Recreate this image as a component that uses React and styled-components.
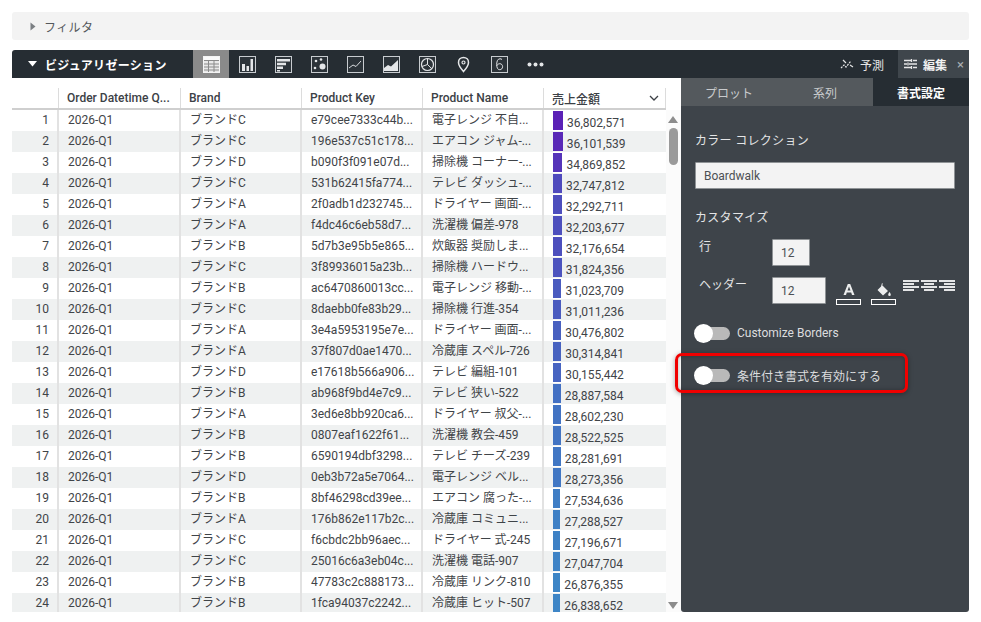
import React from 'react';
import styled, { createGlobalStyle } from 'styled-components';

const GlobalStyle = createGlobalStyle`
  html, body {
    margin: 0;
    padding: 0;
    background: #fff;
    font-family: Roboto, "Noto Sans CJK JP", sans-serif;
    overflow: hidden;
  }
`;

const Page = styled.div`
  width: 981px;
  height: 622px;
  box-sizing: border-box;
  padding: 12px 12px 10px;
  display: flex;
  flex-direction: column;
  overflow: hidden;
`;

const FilterBar = styled.div`
  height: 28px;
  flex: none;
  display: flex;
  align-items: center;
  gap: 8px;
  padding-left: 18px;
  background: #f3f3f3;
  border-radius: 3px;
  font-size: 12px;
  letter-spacing: 0.4px;
  color: #53585c;
`;

const VizHeader = styled.div`
  height: 28px;
  flex: none;
  margin-top: 10px;
  display: flex;
  align-items: center;
  background: #262d33;
  border-radius: 3px 3px 0 0;
  color: #fff;
`;

const VizTitle = styled.div`
  width: 181px;
  flex: none;
  display: flex;
  align-items: center;
  gap: 8px;
  padding-left: 16px;
  box-sizing: border-box;
  font-size: 12px;
  font-weight: 700;
  letter-spacing: 0.3px;
`;

const ChartButton = styled.div`
  width: 36px;
  height: 28px;
  flex: none;
  display: flex;
  align-items: center;
  justify-content: center;
  background: ${(p) => (p.$active ? '#8a8a8a' : 'transparent')};
`;

const HeaderRight = styled.div`
  margin-left: auto;
  height: 100%;
  display: flex;
  align-items: center;
`;

const ModeButton = styled.div`
  height: 100%;
  display: flex;
  align-items: center;
  gap: 6px;
  box-sizing: border-box;
  padding: ${(p) => (p.$active ? '0 5px 0 6px' : '0 14px 0 0')};
  background: ${(p) => (p.$active ? '#3f464c' : 'transparent')};
  color: ${(p) => (p.$active ? '#f2f2f2' : '#e6e6e6')};
  font-size: 12px;
  font-weight: ${(p) => (p.$active ? 700 : 400)};
`;

const CloseMark = styled.span`
  margin-left: 4px;
  font-size: 13px;
  font-weight: 400;
  color: #a9aeb2;
`;

const Body = styled.div`
  flex: 1;
  min-height: 0;
  display: flex;
`;

const TableArea = styled.div`
  width: 669px;
  flex: none;
  position: relative;
  overflow: hidden;
`;

const HeaderRow = styled.div`
  height: 32px;
  box-sizing: border-box;
  padding-top: 10px;
  display: flex;
  border-bottom: 2px solid #cfcfcf;
  width: 654px;
`;

const HeaderCell = styled.div`
  width: ${(p) => p.$w}px;
  flex: none;
  box-sizing: border-box;
  padding-left: 8px;
  padding-right: 6px;
  border-right: 1px solid #dcdcdc;
  display: flex;
  align-items: center;
  justify-content: space-between;
  font-size: 12px;
  font-weight: 500;
  color: #3c4146;
  white-space: nowrap;
`;

const Row = styled.div`
  height: 21px;
  width: 654px;
  display: flex;
  background: ${(p) => (p.$odd ? '#fff' : '#eff1f1')};
`;

const Cell = styled.div`
  width: ${(p) => p.$w}px;
  flex: none;
  box-sizing: border-box;
  padding-left: 9px;
  border-right: 2px solid #e2e2e2;
  font-size: 12px;
  line-height: 21px;
  color: #3f4448;
  white-space: nowrap;
  overflow: hidden;
`;

const IndexCell = styled(Cell)`
  padding: 0 8px 0 0;
  text-align: right;
`;

const ValueCell = styled.div`
  flex: 1;
  display: flex;
  box-sizing: border-box;
  padding: 1px 0 1px 9px;
  font-size: 12px;
  color: #3f4448;
`;

const ValueBar = styled.div`
  height: 19px;
  flex: none;
`;

const ValueText = styled.span`
  margin-left: 4px;
  line-height: 24px;
`;

const ScrollTrack = styled.div`
  position: absolute;
  right: 0;
  top: 32px;
  bottom: 0;
  width: 15px;
  background: #fbfbfb;
`;

const ScrollArrow = styled.div`
  position: absolute;
  left: 2px;
  ${(p) => (p.$up ? 'top: 6px;' : 'bottom: 3px;')}
  width: 0;
  height: 0;
  border-left: 5px solid transparent;
  border-right: 5px solid transparent;
  ${(p) => (p.$up ? 'border-bottom: 7px solid #8c8c8c;' : 'border-top: 7px solid #8c8c8c;')}
`;

const ScrollThumb = styled.div`
  position: absolute;
  left: 3px;
  top: 18px;
  width: 9px;
  height: 37px;
  border-radius: 5px;
  background: #9a9a9a;
`;

const Panel = styled.div`
  width: 288px;
  flex: none;
  position: relative;
  background: #3e444a;
  border-radius: 0 0 3px 3px;
  color: #e4e5e6;
`;

const Tabs = styled.div`
  height: 28px;
  display: grid;
  grid-template-columns: 96px 96px 96px;
  background: #54595d;
`;

const Tab = styled.div`
  display: flex;
  align-items: center;
  justify-content: center;
  font-size: 12px;
  font-weight: ${(p) => (p.$active ? 700 : 400)};
  color: ${(p) => (p.$active ? '#fff' : '#c9cbcd')};
  background: ${(p) => (p.$active ? '#262d33' : 'transparent')};
`;

const PanelBody = styled.div`
  padding: 26px 14px 0;
  display: flex;
  flex-direction: column;
`;

const SectionLabel = styled.div`
  font-size: 12px;
  line-height: 18px;
  letter-spacing: 0.3px;
`;

const Field = styled.div`
  box-sizing: border-box;
  width: ${(p) => p.$w}px;
  height: 27px;
  flex: none;
  padding-left: ${(p) => p.$pad || 8}px;
  display: flex;
  align-items: center;
  background: #f3f3f3;
  border: 1px solid #8f9396;
  border-radius: 1px;
  font-size: 12px;
  color: #4c5054;
`;

const CustomRow = styled.div`
  display: flex;
  align-items: flex-start;
  margin-top: ${(p) => p.$top}px;
`;

const RowLabel = styled.div`
  width: 77px;
  flex: none;
  padding-left: 4px;
  box-sizing: border-box;
  font-size: 12px;
  line-height: 16px;
  margin-top: ${(p) => p.$top || 0}px;
`;

const ColorTool = styled.div`
  width: 25px;
  margin-left: ${(p) => p.$left}px;
  flex: none;
  display: flex;
  flex-direction: column;
  align-items: center;
`;

const Swatch = styled.div`
  width: 25px;
  height: 6px;
  box-sizing: border-box;
  margin-top: 1px;
  border: 1px solid #fff;
`;

const AlignGroup = styled.div`
  display: flex;
  gap: 2px;
  margin: 3px 0 0 7px;
`;

const ToggleRow = styled.div`
  display: flex;
  align-items: center;
  gap: 7px;
  height: 18px;
  margin-top: ${(p) => p.$top}px;
  font-size: 12px;
  color: #dcdddf;
`;

const Toggle = styled.div`
  position: relative;
  width: 35px;
  height: 13px;
  flex: none;
  background: #b9b9b9;
  border-radius: 7px;
`;

const Knob = styled.div`
  position: absolute;
  left: -1px;
  top: -3px;
  width: 19px;
  height: 19px;
  border-radius: 50%;
  background: #fff;
`;

const Callout = styled.div`
  position: absolute;
  left: -6px;
  top: 275px;
  width: 233px;
  height: 40px;
  box-sizing: border-box;
  border: 3px solid #f00000;
  border-radius: 7px;
  box-shadow: 0 1px 5px rgba(0, 0, 0, 0.35), inset 0 0 4px rgba(0, 0, 0, 0.3);
  pointer-events: none;
`;

const Frame = ({ children }) => (
  <svg width="17" height="17" viewBox="0 0 17 17">
    <rect x="0.5" y="0.5" width="16" height="16" fill="#2c3339" stroke="#c8ccd0" />
    {children}
  </svg>
);

const chartIcons = [
  <svg width="17" height="17" viewBox="0 0 17 17" key="table">
    <rect x="0.5" y="0.5" width="16" height="16" fill="#e8e8e8" stroke="#f4f4f4" />
    <rect x="1" y="1" width="15" height="3" fill="#fafafa" />
    <path d="M1 4.5h15M1 8h15M1 11h15M1 14h15M5.5 4v12M11 4v12" stroke="#8a8a8a" strokeWidth="1" />
  </svg>,
  <Frame key="bar">
    <path d="M3 8h3v7H3zM7.5 10h2.500v5H7.500zM11.500 3H14v12h-2.500z" fill="#e4e6e8" />
  </Frame>,
  <Frame key="rank">
    <path d="M2 3h13v2.500H2zM2 6.800h9v2.500H2zM2 10.500h6V13H2zM2 14h3v1.500H2z" fill="#e4e6e8" />
  </Frame>,
  <Frame key="scatter">
    <circle cx="5" cy="5" r="1.300" fill="#e4e6e8" />
    <circle cx="10" cy="3.500" r="1.300" fill="#e4e6e8" />
    <circle cx="4" cy="12" r="1.300" fill="#e4e6e8" />
    <circle cx="11.500" cy="10.500" r="3" fill="#e4e6e8" />
  </Frame>,
  <Frame key="line">
    <path d="M2 12l4-3 3 1.500 5-5.500" fill="none" stroke="#d8dbde" strokeWidth="1" />
  </Frame>,
  <Frame key="area">
    <path d="M1 15V12l4-3 3 1.500 7-6.500v11z" fill="#e4e6e8" />
  </Frame>,
  <svg width="17" height="17" viewBox="0 0 17 17" key="pie">
    <rect x="0.500" y="0.500" width="16" height="16" fill="#2c3339" stroke="#c8ccd0" />
    <circle cx="8.500" cy="8.500" r="6" fill="none" stroke="#e4e6e8" strokeWidth="1.200" />
    <path d="M8.500 2.500v6l4.300 4.200M8.500 8.500l-5.500 2" fill="none" stroke="#e4e6e8" strokeWidth="1" />
  </svg>,
  <svg width="17" height="17" viewBox="0 0 17 17" key="pin">
    <path d="M8.500 1.500c-2.900 0-5 2.100-5 4.900 0 3.300 5 9.100 5 9.100s5-5.800 5-9.100c0-2.800-2.100-4.900-5-4.900z" fill="none" stroke="#e4e6e8" strokeWidth="1.500" />
    <circle cx="8.500" cy="6.500" r="1.500" fill="none" stroke="#e4e6e8" strokeWidth="1.200" />
  </svg>,
  <svg width="17" height="17" viewBox="0 0 17 17" key="single">
    <rect x="0.500" y="0.500" width="16" height="16" fill="#2c3339" stroke="#c8ccd0" />
    <path d="M11 3.500c-.6-.5-1.300-.7-2-.7-2.200 0-3.300 2.200-3.300 5.700 0 3.300 1 5.200 3 5.200 1.700 0 2.900-1.300 2.900-3 0-1.800-1.200-3-2.800-3-1.300 0-2.500.8-3 2" fill="none" stroke="#e4e6e8" strokeWidth="1" />
  </svg>,
  <svg width="17" height="17" viewBox="0 0 17 17" key="more">
    <circle cx="2.500" cy="8.500" r="2" fill="#e4e6e8" />
    <circle cx="8.500" cy="8.500" r="2" fill="#e4e6e8" />
    <circle cx="14.500" cy="8.500" r="2" fill="#e4e6e8" />
  </svg>,
];

const AlignIcon = ({ lines }) => (
  <svg width="16" height="13" viewBox="0 0 16 13">
    {lines.map(([x, w], i) => (
      <rect key={i} x={x} y={i * 3} width={w} height="2" fill="#e4e5e6" />
    ))}
  </svg>
);

const columns = [47, 122, 121, 121, 121];

const rows = [
  ['ブランドC', 'e79cee7333c44b...', '電子レンジ 不自...', '36,802,571'],
  ['ブランドC', '196e537c51c178...', 'エアコン ジャム-...', '36,101,539'],
  ['ブランドD', 'b090f3f091e07d...', '掃除機 コーナー-...', '34,869,852'],
  ['ブランドC', '531b62415fa774...', 'テレビ ダッシュ-...', '32,747,812'],
  ['ブランドA', '2f0adb1d232745...', 'ドライヤー 画面-...', '32,292,711'],
  ['ブランドA', 'f4dc46c6eb58d7...', '洗濯機 偏差-978', '32,203,677'],
  ['ブランドB', '5d7b3e95b5e865...', '炊飯器 奨励しま...', '32,176,654'],
  ['ブランドC', '3f89936015a23b...', '掃除機 ハードウ...', '31,824,356'],
  ['ブランドB', 'ac6470860013cc...', '電子レンジ 移動-...', '31,023,709'],
  ['ブランドC', '8daebb0fe83b29...', '掃除機 行進-354', '31,011,236'],
  ['ブランドA', '3e4a5953195e7e...', 'ドライヤー 画面-...', '30,476,802'],
  ['ブランドA', '37f807d0ae1470...', '冷蔵庫 スペル-726', '30,314,841'],
  ['ブランドD', 'e17618b566a906...', 'テレビ 編組-101', '30,155,442'],
  ['ブランドB', 'ab968f9bd4e7c9...', 'テレビ 狭い-522', '28,887,584'],
  ['ブランドA', '3ed6e8bb920ca6...', 'ドライヤー 叔父-...', '28,602,230'],
  ['ブランドB', '0807eaf1622f61...', '洗濯機 教会-459', '28,522,525'],
  ['ブランドB', '6590194dbf3298...', 'テレビ チーズ-239', '28,281,691'],
  ['ブランドD', '0eb3b72a5e7064...', '電子レンジ ベル...', '28,273,356'],
  ['ブランドB', '8bf46298cd39ee...', 'エアコン 腐った-...', '27,534,636'],
  ['ブランドA', '176b862e117b2c...', '冷蔵庫 コミュニ...', '27,288,527'],
  ['ブランドC', 'f6cbdc2bb96aec...', 'ドライヤー 式-245', '27,196,671'],
  ['ブランドC', '25016c6a3eb04c...', '洗濯機 電話-907', '27,047,704'],
  ['ブランドB', '47783c2c888173...', '冷蔵庫 リンク-810', '26,876,355'],
  ['ブランドB', '1fca94037c2242...', '冷蔵庫 ヒット-507', '26,838,652'],
];

const barStyle = (text) => {
  const value = Number(text.replace(/,/g, ''));
  const t = (value - 26838652) / (36802571 - 26838652);
  const r = Math.round(61 + (91 - 61) * t);
  const g = Math.round(133 + (33 - 133) * t);
  const b = Math.round(198 + (182 - 198) * t);
  return { width: `${value / 3680257}px`, background: `rgb(${r},${g},${b})` };
};

const App = () => (
  <Page>
    <GlobalStyle />
    <FilterBar>
      <svg width="6" height="9" viewBox="0 0 6 9"><path d="M0.500 0.500l5 4-5 4z" fill="#7b7f83" /></svg>
      フィルタ
    </FilterBar>
    <VizHeader>
      <VizTitle>
        <svg width="9" height="6" viewBox="0 0 9 6"><path d="M0 0h9L4.500 5.500z" fill="#fff" /></svg>
        ビジュアリゼーション
      </VizTitle>
      {chartIcons.map((icon, i) => (
        <ChartButton key={i} $active={i === 0}>{icon}</ChartButton>
      ))}
      <HeaderRight>
        <ModeButton>
          <svg width="14" height="12" viewBox="0 0 14 12">
            <path d="M1 10l3-3 2 2 5-6" fill="none" stroke="#e6e6e6" strokeWidth="1.200" strokeDasharray="2 1" />
            <path d="M3 2l3 3M10 7l3 2" stroke="#e6e6e6" strokeWidth="1.200" />
          </svg>
          予測
        </ModeButton>
        <ModeButton $active>
          <svg width="13" height="12" viewBox="0 0 13 12">
            <path d="M0 2.500h7M9 2.500h4M0 6h3M5 6h8M0 9.500h7M9 9.500h4M7.500 1v3M4 4.500v3M7.500 8v3" stroke="#e6e6e6" strokeWidth="1.300" />
          </svg>
          編集
          <CloseMark>×</CloseMark>
        </ModeButton>
      </HeaderRight>
    </VizHeader>
    <Body>
      <TableArea>
        <HeaderRow>
          <HeaderCell $w={columns[0]} />
          <HeaderCell $w={columns[1]}>Order Datetime Q...</HeaderCell>
          <HeaderCell $w={columns[2]}>Brand</HeaderCell>
          <HeaderCell $w={columns[3]}>Product Key</HeaderCell>
          <HeaderCell $w={columns[4]}>Product Name</HeaderCell>
          <HeaderCell $w={122}>
            売上金額
            <svg width="10" height="6" viewBox="0 0 10 6"><path d="M1 1l4 4 4-4" fill="none" stroke="#3c4146" strokeWidth="1.300" /></svg>
          </HeaderCell>
        </HeaderRow>
        {rows.map((row, i) => (
          <Row key={i} $odd={i % 2 === 0}>
            <IndexCell $w={columns[0]}>{i + 1}</IndexCell>
            <Cell $w={columns[1]}>2026-Q1</Cell>
            <Cell $w={columns[2]}>{row[0]}</Cell>
            <Cell $w={columns[3]}>{row[1]}</Cell>
            <Cell $w={columns[4]}>{row[2]}</Cell>
            <ValueCell>
              <ValueBar style={barStyle(row[3])} />
              <ValueText>{row[3]}</ValueText>
            </ValueCell>
          </Row>
        ))}
        <ScrollTrack>
          <ScrollArrow $up />
          <ScrollThumb />
          <ScrollArrow />
        </ScrollTrack>
      </TableArea>
      <Panel>
        <Tabs>
          <Tab>プロット</Tab>
          <Tab>系列</Tab>
          <Tab $active>書式設定</Tab>
        </Tabs>
        <PanelBody>
          <SectionLabel>カラー コレクション</SectionLabel>
          <Field $w={260} style={{ marginTop: 12 }}>Boardwalk</Field>
          <SectionLabel style={{ marginTop: 20 }}>カスタマイズ</SectionLabel>
          <CustomRow $top={12}>
            <RowLabel>行</RowLabel>
            <Field $w={38}>12</Field>
          </CustomRow>
          <CustomRow $top={11}>
            <RowLabel $top={0}>ヘッダー</RowLabel>
            <Field $w={54}>12</Field>
            <ColorTool $left={10}>
              <svg width="14" height="16" viewBox="0 0 14 16" style={{ marginTop: 5 }}>
                <path d="M5.800 2h2.400l4.300 11H10l-.8-2.400H4.800L4 13H1.500zM5.500 8.600h3L7 4.500z" fill="#eceded" fillRule="evenodd" />
              </svg>
              <Swatch />
            </ColorTool>
            <ColorTool $left={10}>
              <svg width="16" height="16" viewBox="0 0 16 16" style={{ marginTop: 5 }}>
                <path d="M6 1l1 1-1 1 6 6-5 4.500L1.500 8 5 4.500z" fill="#eceded" />
                <path d="M13.500 10c.8 1.200 1.300 2 1.300 2.700a1.300 1.300 0 0 1-2.600 0c0-.7.500-1.500 1.300-2.700z" fill="#eceded" />
              </svg>
              <Swatch />
            </ColorTool>
            <AlignGroup>
              <AlignIcon lines={[[0, 16], [0, 11], [0, 16], [0, 11], [0, 16]].slice(0, 4)} />
              <AlignIcon lines={[[0, 16], [3, 10], [0, 16], [3, 10]]} />
              <AlignIcon lines={[[0, 16], [5, 11], [0, 16], [5, 11]]} />
            </AlignGroup>
          </CustomRow>
          <ToggleRow $top={19}>
            <Toggle><Knob /></Toggle>
            Customize Borders
          </ToggleRow>
          <ToggleRow $top={24}>
            <Toggle><Knob /></Toggle>
            条件付き書式を有効にする
          </ToggleRow>
        </PanelBody>
        <Callout />
      </Panel>
    </Body>
  </Page>
);

export default App;
